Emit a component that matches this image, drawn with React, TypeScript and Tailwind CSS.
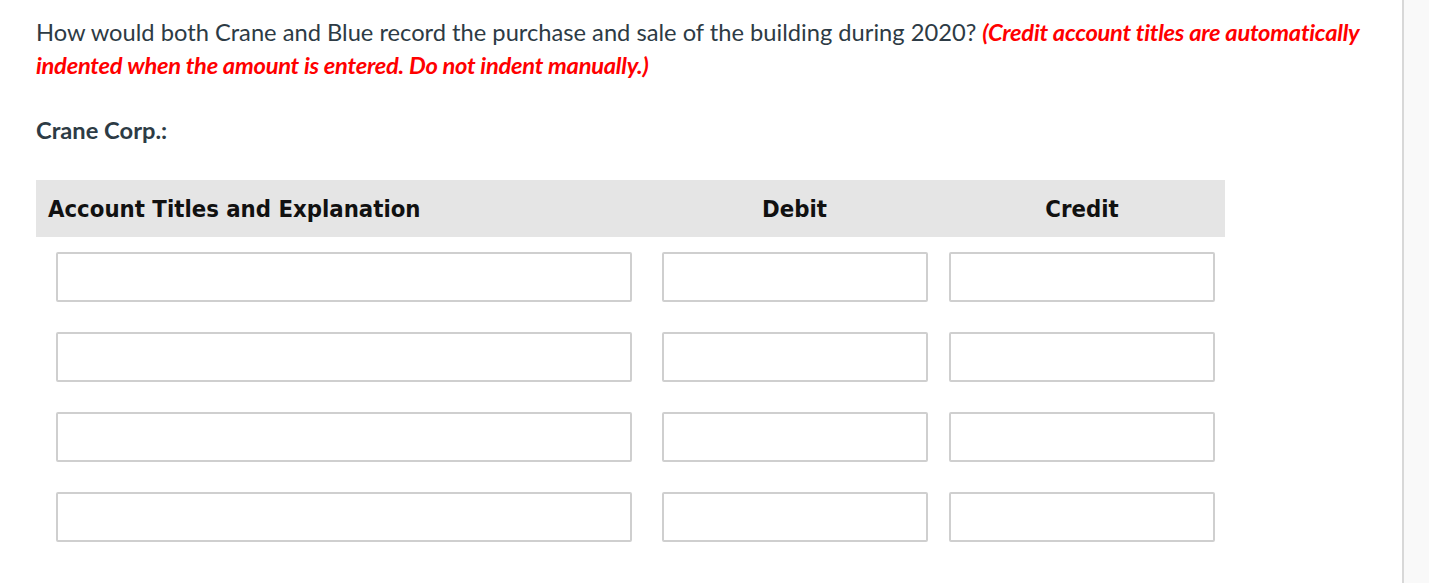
import React from "react";

const rows = [0, 1, 2, 3];

const inputClass =
  "h-[50px] rounded-[2px] border-2 border-[#cfcfcf] bg-white outline-none";

export default function App() {
  return (
    <div className="flex h-[583px] w-[1429px] bg-white font-['Lato','Liberation_Sans',sans-serif]">
      <main className="w-[1404px] border-r-2 border-[#d8d8d8] pl-[36px] pt-[16px]">
        <p className="w-[1340px] text-[23.7px] leading-[33px] text-[#2d3b45]">
          How would both Crane and Blue record the purchase and sale of the building during 2020?{" "}
          <em className="font-bold italic tracking-[-0.25px] text-[#ff0000]">
            (Credit account titles are automatically indented when the amount is entered. Do not indent manually.)
          </em>
        </p>

        <p className="mt-[32px] text-[23.7px] font-bold leading-[33px] text-[#2d3b45]">Crane Corp.:</p>

        <div className="mt-[33px] w-[1189px]">
          <div className="flex h-[57px] items-center bg-[#e5e5e5] pt-[2px] font-['DejaVu_Sans_Condensed','DejaVu_Sans',sans-serif] text-[23.7px] font-bold text-[#111]">
            <div className="w-[626px] pl-3">Account Titles and Explanation</div>
            <div className="w-[265px] text-center">Debit</div>
            <div className="w-[22px]" />
            <div className="w-[266px] text-center">Credit</div>
          </div>

          <div className="flex flex-col gap-[30px] pl-[20px] pt-[15px]">
            {rows.map((r) => (
              <div key={r} className="flex">
                <input type="text" className={`${inputClass} w-[576px]`} />
                <input type="text" className={`${inputClass} ml-[30px] w-[266px]`} />
                <input type="text" className={`${inputClass} ml-[21px] w-[266px]`} />
              </div>
            ))}
          </div>
        </div>
      </main>
      <aside className="flex-1 bg-[#f9f9f9]" />
    </div>
  );
}
